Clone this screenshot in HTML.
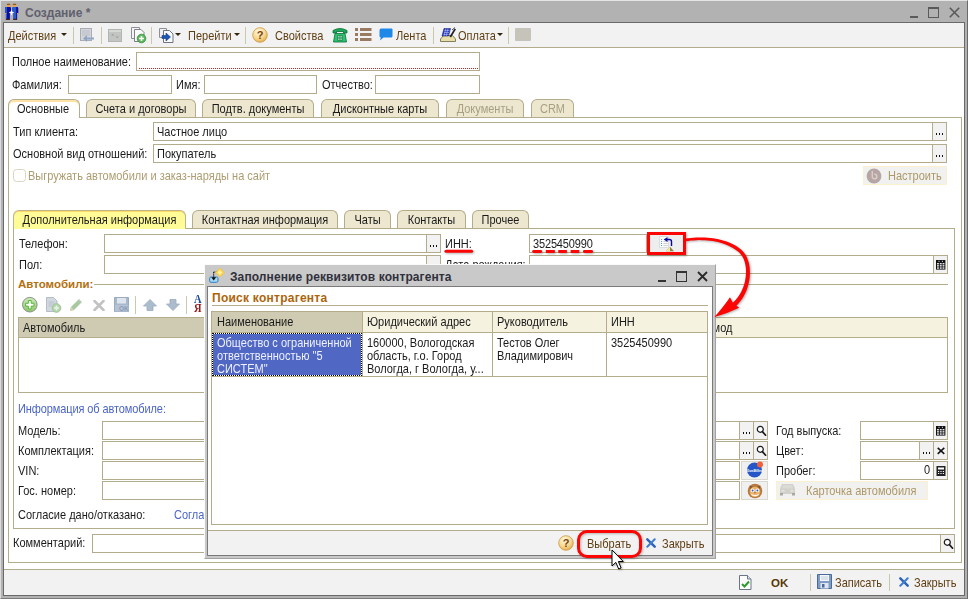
<!DOCTYPE html>
<html lang="ru">
<head>
<meta charset="utf-8">
<title>Создание *</title>
<style>
*{box-sizing:border-box;margin:0;padding:0}
html,body{width:968px;height:599px;overflow:hidden;background:#ababab}
body{font-family:"Liberation Sans",sans-serif;font-size:11px;color:#1a1a1a;position:relative}
.a{position:absolute}
.t{position:absolute;white-space:nowrap;line-height:13px;height:13px;transform:scaleY(1.1);transform-origin:0 10.300px}
.in{position:absolute;background:#fff;border:1px solid #b3ac8c;height:19px}
.btn{position:absolute;background:#f2f2f2;border-left:1px solid #b3ac8c;top:0;bottom:0;text-align:center;font-weight:bold;line-height:15px;font-size:11px;color:#000}
.sep{position:absolute;width:1px;background:#cdc8ac;top:27px;height:17px}
.tab{position:absolute;height:18px;border:1px solid #b4ad8c;border-bottom:none;border-radius:6px 6px 0 0;background:#ede7cf;text-align:center;line-height:19px;white-space:nowrap}
.tab.dis{color:#a8a084}
.pane{position:absolute;border:1px solid #b4ad8c;background:#fff}
.hl{position:absolute;height:1px;background:#b4ad8c}
.vl{position:absolute;width:1px;background:#b4ad8c}
.arr{position:absolute;width:6px;height:3px;background:#33260c;clip-path:polygon(0 0,100% 0,50% 100%)}
.nt{transform:none}
.s{display:inline-block;transform:scaleY(1.1);transform-origin:0 62%}
.br{color:#5e3e12}
.dots{position:absolute;left:3px;top:10px;width:1px;height:2px;background:#111;box-shadow:3px 0 #111,6px 0 #111}
</style>
</head>
<body>
<!-- main window frame -->
<div class="a" id="frame" style="left:0;top:0;width:968px;height:599px;background:#b2b2b2;border-top:1px solid #e4e4e4;border-left:1px solid #dcdcdc;border-right:1px solid #6a6a6a;border-bottom:1px solid #7c7c7c"></div>
<div class="a" id="client" style="left:3px;top:22px;width:962px;height:574px;background:#fff;border:1px solid #696969"></div>
<!-- title -->
<div class="t nt" id="title" style="left:25px;top:6px;font-size:12px;font-weight:bold;color:#60606e;line-height:15px;height:15px">Создание *</div>
<!-- MAIN-TITLE-ICONS -->
<svg class="a" style="left:4px;top:3px" width="16" height="18" viewBox="4 3 16 18"><rect x="6.900" y="3.800" width="3.400" height="3.300" rx="1" fill="#f0a050"/><rect x="6.900" y="3.700" width="3.400" height="1.300" rx="0.600" fill="#8a5a20"/><rect x="12.800" y="3.800" width="3.400" height="3.300" rx="1" fill="#f0a050"/><rect x="12.800" y="3.700" width="3.400" height="1.300" rx="0.600" fill="#8a5a20"/><path d="M5 8.200Q5 7 6.200 7h3.800Q11 7 11 8.200v5.300H9.900v5.800H5.900v-5.800H5z" fill="#0a0aa4"/><path d="M5 8.200Q5 7 6.200 7h0.800v12.300H5.900v-5.800H5z" fill="#2a56c4"/><path d="M12 8.200Q12 7 13.200 7h3.800Q18.200 7 18.200 8.200v5.300h-1.100v5.800h-4v-5.800H12z" fill="#2a5ac8"/><path d="M16.200 7h0.800Q18.200 7 18.200 8.200v5.300h-1.100v5.800h-0.900z" fill="#0c0ca0"/><rect x="5" y="13" width="1.300" height="1" fill="#f0a050"/><rect x="17" y="13" width="1.300" height="1" fill="#f0a050"/><rect x="5.900" y="18.800" width="4" height="1.100" fill="#3a1a10"/><rect x="13.100" y="18.800" width="4" height="1.100" fill="#3a1a10"/><path d="M11.500 9.800l0.900 1.900 1.900 0.900-1.900 0.900-0.900 1.900-0.900-1.900-1.900-0.900 1.900-0.900z" fill="#fff"/></svg>
<div class="a" style="left:910px;top:16px;width:8px;height:2px;background:#5a5a5a"></div>
<div class="a" style="left:928px;top:7px;width:11px;height:11px;border:1px solid #5a5a5a;border-top-width:2px"></div>
<svg class="a" style="left:949px;top:7px" width="11" height="11" viewBox="0 0 11 11"><path d="M0.800 0.800l9.400 9.400M10.200 0.800l-9.400 9.400" stroke="#5a5a5a" stroke-width="1.600"/></svg>

<!-- toolbar -->
<div class="a" id="tb" style="left:4px;top:23px;width:960px;height:25px;background:#f2f2f2;border-bottom:1px solid #b3ac8c"></div>
<!-- TOOLBAR-ITEMS -->
<div class="t br" style="left:8px;top:30px">Действия</div><div class="arr" style="left:61px;top:33px"></div>
<div class="sep" style="left:73px"></div>
<svg class="a" style="left:79px;top:28px" width="16" height="15" viewBox="0 0 16 15"><rect x="1.5" y="0.5" width="11" height="12" fill="#d4d6da" stroke="#a8adb5"/><path d="M3 3h8M3 5h8M3 7h8" stroke="#b9bdc4" stroke-width="1"/><path d="M15 9.5H8v-2.500L4 10.500l4 3.500V11.500h7z" fill="#8fa6c4"/></svg>
<div class="sep" style="left:101px"></div>
<svg class="a" style="left:108px;top:29px" width="14" height="13" viewBox="0 0 14 13"><rect x="0.500" y="0.500" width="13" height="12" fill="#c3c5c3" stroke="#b2b4b2"/><rect x="1" y="1" width="12" height="2" fill="#d6d8d6"/><path d="M3 6.500h3.500L4.800 4.800zM7.500 7.500H11L9.200 9.200z" fill="#98a39a"/></svg>
<svg class="a" style="left:131px;top:27px" width="16" height="17" viewBox="0 0 16 17"><path d="M0.500 0.500h8v11h-8z" fill="#f4f4f4" stroke="#8c9096"/><path d="M3.500 2.500h6.500l3 3v9h-9.500z" fill="#fbfbfb" stroke="#7c8088"/><circle cx="10.500" cy="11.500" r="4.300" fill="#5cb85c" stroke="#3a8a3a" stroke-width="0.800"/><path d="M8 11.500h5M10.500 9v5" stroke="#fff" stroke-width="1.600"/></svg>
<div class="sep" style="left:151px"></div>
<svg class="a" style="left:159px;top:28px" width="15" height="15" viewBox="0 0 15 15"><path d="M0.500 0.500h7v9h-7z" fill="#f0f0f0" stroke="#8c9096"/><path d="M4.500 2.500h6l3.500 3.500v8.500h-9.500z" fill="#fafafa" stroke="#70747c"/><path d="M3 7.500h4V5l4.500 4L7 13v-2.500H3z" fill="#1f55b5" stroke="#123a85" stroke-width="0.600"/></svg>
<div class="arr" style="left:175px;top:33px"></div>
<div class="t br" style="left:188px;top:30px">Перейти</div><div class="arr" style="left:234px;top:33px"></div>
<div class="sep" style="left:245px"></div>
<svg class="a" style="left:252px;top:27px" width="16" height="16" viewBox="0 0 16 16"><defs><radialGradient id="qg" cx="0.400" cy="0.300" r="0.800"><stop offset="0" stop-color="#fffae6"/><stop offset="0.550" stop-color="#f8d88c"/><stop offset="1" stop-color="#dfa040"/></radialGradient></defs><circle cx="8" cy="8" r="7.300" fill="url(#qg)" stroke="#c89a4a" stroke-width="0.800"/><text x="8" y="12" font-family="Liberation Sans,sans-serif" font-size="11" font-weight="bold" fill="#7a4210" text-anchor="middle">?</text></svg>
<div class="t br" style="left:275px;top:30px">Свойства</div>
<svg class="a" style="left:332px;top:27px" width="16" height="16" viewBox="0 0 16 16"><path d="M1 3.500Q8 -0.500 15 3.500v2.500h-3.500V4.500h-7V6H1z" fill="#1aa85a" stroke="#0b6b36" stroke-width="0.800"/><path d="M3 6.500h10l1.500 8.500h-13z" fill="#27c76f" stroke="#0b6b36" stroke-width="0.800"/><path d="M5.500 8.500h5v5h-5zM7.200 8.500v5M8.900 8.500v5M5.500 10.200h5M5.500 11.800h5" fill="#d8ffe8" stroke="#0b6b36" stroke-width="0.600"/></svg>
<svg class="a" style="left:355px;top:28px" width="17" height="13" viewBox="0 0 17 13"><g fill="#977a60"><rect x="0" y="0" width="3" height="3"/><rect x="5" y="0" width="11.500" height="3"/><rect x="0" y="5" width="3" height="3"/><rect x="5" y="5" width="11.500" height="3"/><rect x="0" y="10" width="3" height="3"/><rect x="5" y="10" width="11.500" height="3"/></g></svg>
<svg class="a" style="left:379px;top:28px" width="14" height="13" viewBox="0 0 14 13"><path d="M3 0.500h9.500a1 1 0 0 1 1 1V8a1.500 1.500 0 0 1 -1.500 1.500H4.500L1 12.500 1.800 9.500A1.500 1.500 0 0 1 0.500 8V2.500a2 2 0 0 1 2.500 -2z" fill="#1e88e8"/></svg>
<div class="t br" style="left:396px;top:30px">Лента</div>
<div class="sep" style="left:433px"></div>
<svg class="a" style="left:440px;top:27px" width="17" height="16" viewBox="0 0 17 16"><path d="M0.500 12l3 -3.500h9l3 3.500v2.500h-15z" fill="#e8dfa8" stroke="#6a6440" stroke-width="0.800"/><path d="M4 1.500h6.500L8.500 9H2z" fill="#2a3cc0" stroke="#1a2470" stroke-width="0.600"/><path d="M4.500 3.500h5M4 5.500h5M3.500 7.500h5M5.800 1.500L4 9M8 1.500L6.200 9" stroke="#c8d0ff" stroke-width="0.500"/><path d="M9.500 9.500L14.500 1.500l1.500 0.800L11 10.500z" fill="#222"/><path d="M12 3l3 -2.500" stroke="#222" stroke-width="0.800"/></svg>
<div class="t br" style="left:458px;top:30px">Оплата</div><div class="arr" style="left:497px;top:33px"></div>
<div class="sep" style="left:508px"></div>
<div class="a" style="left:515px;top:28px;width:16px;height:13px;background:#c6c4ba;border-radius:1px"></div>

<!-- FORM -->
<div class="t" style="left:12px;top:56px">Полное наименование:</div>
<div class="in" style="left:136px;top:52px;width:344px"><div class="a" style="left:2px;right:1px;bottom:1px;border-bottom:1px dotted #f01010"></div></div>
<div class="t" style="left:12px;top:79px">Фамилия:</div><div class="in" style="left:68px;top:75px;width:104px"></div>
<div class="t" style="left:176px;top:79px">Имя:</div><div class="in" style="left:204px;top:75px;width:113px"></div>
<div class="t" style="left:322px;top:79px">Отчество:</div><div class="in" style="left:375px;top:75px;width:105px"></div>
<!-- outer pane -->
<div class="pane" style="left:8px;top:117px;width:954px;height:446px"></div>
<div class="tab" style="left:8px;top:99px;width:72px;height:19px;background:#fff;box-shadow:inset 0 2px 0 #ffe3a6;line-height:18px;text-indent:-1px"><span class="s">Основные</span></div>
<div class="tab" style="left:86px;top:99px;width:110px"><span class="s">Счета и договоры</span></div>
<div class="tab" style="left:202px;top:99px;width:112px"><span class="s">Подтв. документы</span></div>
<div class="tab" style="left:321px;top:99px;width:118px"><span class="s">Дисконтные карты</span></div>
<div class="tab dis" style="left:446px;top:99px;width:78px"><span class="s">Документы</span></div>
<div class="tab dis" style="left:531px;top:99px;width:43px"><span class="s">CRM</span></div>
<div class="t" style="left:13px;top:126px">Тип клиента:</div>
<div class="in" style="left:153px;top:122px;width:794px"><div class="t" style="left:3px;top:3px">Частное лицо</div><div class="btn" style="right:0;width:14px"><i class="dots"></i></div></div>
<div class="t" style="left:13px;top:148px">Основной вид отношений:</div>
<div class="in" style="left:153px;top:144px;width:794px"><div class="t" style="left:3px;top:3px">Покупатель</div><div class="btn" style="right:0;width:14px"><i class="dots"></i></div></div>
<div class="a" style="left:13px;top:169px;width:13px;height:13px;border:1px solid #dad5c0;border-radius:3.500px;background:#fff"></div>
<div class="t" style="left:28px;top:170px;color:#ad9c70">Выгружать автомобили и заказ-наряды на сайт</div>
<div class="a" style="left:863px;top:166px;width:84px;height:19px;background:#f1f1f0;border:1px solid #fbf1cf"></div>
<svg class="a" style="left:866px;top:168px" width="16" height="16" viewBox="0 0 16 16"><circle cx="8" cy="8" r="7.400" fill="#b5a5a5"/><path d="M6.300 3.500v5a2.300 2.300 0 1 0 2.500 -2.300" fill="none" stroke="#d9cdc4" stroke-width="1.500" stroke-linecap="round"/></svg>
<div class="t" style="left:888px;top:170px;color:#ad9868">Настроить</div>
<!-- inner pane -->
<div class="pane" style="left:13px;top:228px;width:942px;height:301px"></div>
<div class="tab" style="left:13px;top:210px;width:173px;height:19px;background:#fffb96;box-shadow:inset 0 1px 0 #ffd868;border-color:#bcb48c;line-height:18px"><span class="s">Дополнительная информация</span></div>
<div class="tab" style="left:192px;top:210px;width:146px;height:18px;line-height:18px"><span class="s">Контактная информация</span></div>
<div class="tab" style="left:344px;top:210px;width:47px;height:18px;line-height:18px"><span class="s">Чаты</span></div>
<div class="tab" style="left:397px;top:210px;width:69px;height:18px;line-height:18px"><span class="s">Контакты</span></div>
<div class="tab" style="left:472px;top:210px;width:57px;height:18px;line-height:18px"><span class="s">Прочее</span></div>
<div class="t" style="left:19px;top:238px">Телефон:</div>
<div class="in" style="left:104px;top:234px;width:337px"><div class="btn" style="right:0;width:14px"><i class="dots"></i></div></div>
<div class="t" style="left:445px;top:238px">ИНН:</div>
<svg class="a" style="left:440px;top:246px;overflow:visible" width="40" height="10" viewBox="440 246 40 10"><path d="M446 251.300H471.600" stroke="#fb0505" stroke-width="3.100" stroke-linecap="round" filter="drop-shadow(1px 1px 1px rgba(0,0,0,.3))"/></svg>
<div class="in" style="left:529px;top:234px;width:118px"><div class="t" style="left:3px;top:3px;letter-spacing:-0.150px">3525450990</div></div>
<svg class="a" style="left:528px;top:246px;overflow:visible" width="72" height="12" viewBox="528 246 72 12"><g fill="#fb0505" filter="drop-shadow(1px 1px 1px rgba(0,0,0,.3))"><rect x="532.2" y="249.900" width="9.9" height="3.100" rx="1.400"/><rect x="545.8" y="249.900" width="9.1" height="3.100" rx="0.400"/><rect x="558.2" y="249.900" width="8.7" height="3.100" rx="0.400"/><rect x="570.6" y="249.900" width="8.7" height="3.100" rx="0.400"/><rect x="583.0" y="249.900" width="10.0" height="3.100" rx="1.400"/></g></svg>
<div class="t" style="left:19px;top:259px">Пол:</div>
<div class="in" style="left:104px;top:255px;width:337px"><div class="btn" style="right:0;width:14px"></div></div>
<div class="t" style="left:445px;top:259px">Дата рождения:</div>
<div class="in" style="left:529px;top:255px;width:419px"><div class="btn" style="right:0;width:14px"><svg class="a" style="left:2px;top:4px" width="10" height="10" viewBox="0 0 10 10"><rect x="0" y="0" width="9.400" height="9.600" fill="#111"/><rect x="2.500" y="0.800" width="1" height="1" fill="#fff"/><rect x="5.900" y="0.800" width="1" height="1" fill="#fff"/><rect x="1.0" y="3.1" width="1.900" height="1.300" fill="#fff"/><rect x="3.8" y="3.1" width="1.900" height="1.300" fill="#fff"/><rect x="6.5" y="3.1" width="1.900" height="1.300" fill="#fff"/><rect x="1.0" y="5.2" width="1.900" height="1.300" fill="#fff"/><rect x="3.8" y="5.2" width="1.900" height="1.300" fill="#fff"/><rect x="6.5" y="5.2" width="1.900" height="1.300" fill="#fff"/><rect x="1.0" y="7.4" width="1.900" height="1.300" fill="#fff"/><rect x="3.8" y="7.4" width="1.900" height="1.300" fill="#fff"/><rect x="6.5" y="7.4" width="1.900" height="1.300" fill="#fff"/></svg></div></div>
<div class="t nt" style="left:18px;top:278px;font-size:11.500px;font-weight:bold;color:#b5700e">Автомобили:</div>
<div class="hl" style="left:94px;top:284px;width:854px"></div>
<!-- CAR-TOOLBAR -->
<svg class="a" style="left:21px;top:296px" width="18" height="18" viewBox="0 0 18 18"><defs><linearGradient id="gp" x1="0" y1="0" x2="0" y2="1"><stop offset="0" stop-color="#cfe8bb"/><stop offset="1" stop-color="#8fc46c"/></linearGradient></defs><circle cx="8.800" cy="8.700" r="7.300" fill="url(#gp)" stroke="#7e8a80" stroke-width="0.900"/><path d="M7.400 4.500h2.800v2.800h2.800v2.800h-2.800v2.800h-2.800v-2.800h-2.800v-2.800h2.800z" fill="#fff" stroke="#4ab42c" stroke-width="0.900"/></svg>
<svg class="a" style="left:46px;top:297px" width="16" height="16" viewBox="0 0 16 16"><path d="M0.500 0.500h7l3.500 3.500v10.500h-10.500z" fill="#d2d8e0" stroke="#b4bcc8"/><path d="M2.500 5h6M2.500 7h6M2.500 9h4" stroke="#b8c0cc"/><circle cx="10.500" cy="11" r="4.300" fill="#b4d4ac" stroke="#a0c498"/><path d="M8 11h5M10.500 8.500v5" stroke="#e8f4e4" stroke-width="1.600"/></svg>
<svg class="a" style="left:69px;top:298px" width="14" height="14" viewBox="0 0 14 14"><path d="M1 13l1-4l7.500-7.500l3 3L5 12z" fill="#a8c8a0"/><path d="M1 13l1-4l3 3z" fill="#d8d0b8"/><path d="M9.500 1.500l3 3" stroke="#c0c8c0" stroke-width="1.500"/></svg>
<svg class="a" style="left:93px;top:300px" width="12" height="11" viewBox="0 0 12 11"><path d="M1.500 1l9 9M10.500 1l-9 9" stroke="#c2c2c2" stroke-width="2.600" stroke-linecap="round"/></svg>
<svg class="a" style="left:114px;top:297px" width="16" height="15" viewBox="0 0 16 15"><path d="M0.500 0.500h14v14h-14z" fill="#a9b9cd" stroke="#9aaabf"/><rect x="3" y="1" width="9" height="5.500" fill="#dfe5ee"/><rect x="1" y="8" width="13.500" height="6.500" fill="#b6c3d4"/><text x="5" y="14" font-family="Liberation Sans,sans-serif" font-size="6.500" font-weight="bold" fill="#8b9db6">OK</text></svg>
<div class="sep" style="left:135px;top:296px;height:18px"></div>
<svg class="a" style="left:143px;top:299px" width="14" height="12" viewBox="0 0 14 12"><path d="M7 0.500l6.500 6.500h-3.500v4.500h-6V7h-3.500z" fill="#adbccd" stroke="#9aabc0" stroke-width="0.800"/></svg>
<svg class="a" style="left:166px;top:299px" width="14" height="12" viewBox="0 0 14 12"><path d="M7 11.500l6.500-6.500h-3.500V0.500h-6V5h-3.500z" fill="#adbccd" stroke="#9aabc0" stroke-width="0.800"/></svg>
<div class="sep" style="left:186px;top:296px;height:18px"></div>
<div class="t" style="left:194px;top:295px;font-family:'Liberation Serif',serif;font-weight:bold;font-size:10.500px;color:#1a4a9a;line-height:10px;height:10px">А</div>
<div class="t" style="left:194px;top:304px;font-family:'Liberation Serif',serif;font-weight:bold;font-size:10.500px;color:#941a1a;line-height:10px;height:10px">Я</div>

<div class="a" style="left:18px;top:317px;width:930px;height:76px;border:1px solid #b4ad8c;background:#fff"></div>
<div class="a" style="left:19px;top:318px;width:928px;height:20px;background:#f5f2df;border-bottom:1px solid #b4ad8c"></div>
<div class="a" style="left:19px;top:318px;width:660px;height:20px;background:#cfcab2;border-bottom:1px solid #b4ad8c;border-right:1px solid #b4ad8c"></div>
<div class="t" style="left:23px;top:322px">Автомобиль</div>
<div class="t" style="left:692px;top:322px">Год/мод</div>
<div class="t" style="left:18px;top:403px;color:#4a64c8;letter-spacing:-0.100px">Информация об автомобиле:</div>
<div class="t" style="left:18px;top:425px">Модель:</div>
<div class="in" style="left:102px;top:421px;width:666px"><div class="btn" style="right:14px;width:14px"><i class="dots"></i></div><div class="btn" style="right:0;width:14px"><svg class="a" style="left:1.500px;top:3px" width="11" height="12" viewBox="0 0 11 12"><circle cx="4.300" cy="4.300" r="3" fill="#fff" stroke="#1a1a1a" stroke-width="1.200"/><path d="M6.400 6.600l3.200 3.600" stroke="#1a1a1a" stroke-width="1.700" stroke-linecap="round"/></svg></div></div>
<div class="t" style="left:18px;top:445px">Комплектация:</div>
<div class="in" style="left:102px;top:441px;width:666px"><div class="btn" style="right:14px;width:14px"><i class="dots"></i></div><div class="btn" style="right:0;width:14px"><svg class="a" style="left:1.500px;top:3px" width="11" height="12" viewBox="0 0 11 12"><circle cx="4.300" cy="4.300" r="3" fill="#fff" stroke="#1a1a1a" stroke-width="1.200"/><path d="M6.400 6.600l3.200 3.600" stroke="#1a1a1a" stroke-width="1.700" stroke-linecap="round"/></svg></div></div>
<div class="t" style="left:18px;top:465px">VIN:</div>
<div class="in" style="left:102px;top:461px;width:638px"></div><div class="a" style="left:741px;top:461px;width:27px;height:19px;background:#f0f0f0;border:1px solid #dad8cc"><svg class="a" style="left:3.500px;top:-1.500px" width="18" height="17" viewBox="0 0 18 17"><circle cx="8.500" cy="9" r="7.500" fill="#2456c8"/><circle cx="14" cy="3.500" r="3" fill="#f0603a"/><text x="8.500" y="11" font-family="Liberation Sans,sans-serif" font-size="3.500" font-weight="bold" fill="#fff" text-anchor="middle">GosBiller</text></svg></div>
<div class="t" style="left:18px;top:485px">Гос. номер:</div>
<div class="in" style="left:102px;top:481px;width:638px"></div><div class="a" style="left:741px;top:481px;width:27px;height:19px;background:#f0f0f0;border:1px solid #dad8cc"><svg class="a" style="left:4.500px;top:0.500px" width="16" height="16" viewBox="0 0 16 16"><circle cx="8" cy="8" r="7.300" fill="#b8793e"/><path d="M2.500 2.500l3 1.300h5l3-1.300l-0.800 3.500h-9.400z" fill="#8a5424"/><circle cx="8" cy="8.800" r="5.300" fill="#e9b06a"/><circle cx="5.600" cy="7.400" r="1.900" fill="#fff"/><circle cx="10.400" cy="7.400" r="1.900" fill="#fff"/><circle cx="5.600" cy="7.400" r="1" fill="#2c62c8"/><circle cx="10.400" cy="7.400" r="1" fill="#2c62c8"/><path d="M4.300 10.800q3.700 2.600 7.400 0v1.200q-3.700 2.600-7.400 0z" fill="#fdf6ea"/><path d="M7.200 9.300h1.600l-0.800 1.300z" fill="#7a3e10"/></svg></div>
<div class="t" style="left:776px;top:425px">Год выпуска:</div>
<div class="in" style="left:860px;top:421px;width:88px"><div class="btn" style="right:0;width:14px"><svg class="a" style="left:2px;top:4px" width="10" height="10" viewBox="0 0 10 10"><rect x="0" y="0" width="9.400" height="9.600" fill="#111"/><rect x="2.500" y="0.800" width="1" height="1" fill="#fff"/><rect x="5.900" y="0.800" width="1" height="1" fill="#fff"/><rect x="1.0" y="3.1" width="1.900" height="1.300" fill="#fff"/><rect x="3.8" y="3.1" width="1.900" height="1.300" fill="#fff"/><rect x="6.5" y="3.1" width="1.900" height="1.300" fill="#fff"/><rect x="1.0" y="5.2" width="1.900" height="1.300" fill="#fff"/><rect x="3.8" y="5.2" width="1.900" height="1.300" fill="#fff"/><rect x="6.5" y="5.2" width="1.900" height="1.300" fill="#fff"/><rect x="1.0" y="7.4" width="1.900" height="1.300" fill="#fff"/><rect x="3.8" y="7.4" width="1.900" height="1.300" fill="#fff"/><rect x="6.5" y="7.4" width="1.900" height="1.300" fill="#fff"/></svg></div></div>
<div class="t" style="left:776px;top:445px">Цвет:</div>
<div class="in" style="left:860px;top:441px;width:88px"><div class="btn" style="right:14px;width:14px"><i class="dots"></i></div><div class="btn" style="right:0;width:14px"><svg class="a" style="left:3px;top:5px" width="8" height="8" viewBox="0 0 8 8"><path d="M0.700 0.900l6.600 6M7.300 0.900l-6.600 6" stroke="#111" stroke-width="1.500"/></svg></div></div>
<div class="t" style="left:776px;top:465px">Пробег:</div>
<div class="in" style="left:860px;top:461px;width:88px"><div class="t" style="right:17px;top:2px">0</div><div class="btn" style="right:0;width:14px"><svg class="a" style="left:2px;top:4px" width="10" height="10" viewBox="0 0 9 10"><rect x="0" y="0" width="9" height="10" fill="#222"/><rect x="1.500" y="1.500" width="6" height="2" fill="#fff"/><path d="M1.500 5.500h6M1.500 7.500h6" stroke="#fff" stroke-width="1" stroke-dasharray="1.200 1.200"/></svg></div></div>
<div class="a" style="left:776px;top:481px;width:152px;height:19px;background:#f1f1f0;border:1px solid #fbf1cf"></div>
<svg class="a" style="left:779px;top:483px" width="17" height="13" viewBox="0 0 17 13"><path d="M3 1h11l2 4.500v5.500h-15V5.500z" fill="#d2d0ca"/><path d="M4 2h9l1.300 3.500H2.700z" fill="#dcdad4"/><rect x="1" y="10" width="3" height="2.500" fill="#aaa8a2"/><rect x="13" y="10" width="3" height="2.500" fill="#aaa8a2"/><rect x="2.500" y="7" width="3" height="1.500" fill="#e8e6e0"/><rect x="11.500" y="7" width="3" height="1.500" fill="#e8e6e0"/></svg>
<div class="t" style="left:806px;top:485px;color:#ad9868">Карточка автомобиля</div>
<div class="t" style="left:18px;top:509px">Согласие дано/отказано:</div>
<div class="t" style="left:174px;top:509px;color:#4a64c8">Согласие не получено</div>
<div class="t" style="left:13px;top:537px">Комментарий:</div>
<div class="in" style="left:92px;top:534px;width:863px"><div class="btn" style="right:0;width:14px"><svg class="a" style="left:1.500px;top:3px" width="11" height="12" viewBox="0 0 11 12"><circle cx="4.300" cy="4.300" r="3" fill="#fff" stroke="#1a1a1a" stroke-width="1.200"/><path d="M6.400 6.600l3.200 3.600" stroke="#1a1a1a" stroke-width="1.700" stroke-linecap="round"/></svg></div></div>
<!-- bottom toolbar -->
<div class="a" style="left:4px;top:569px;width:960px;height:26px;background:#f2f2f2;border-top:1px solid #b3ac8c"></div>
<svg class="a" style="left:739px;top:575px" width="13" height="15" viewBox="0 0 13 15"><path d="M0.500 0.500h8l3.500 3.500v10.500h-11.500z" fill="#fdfdfd" stroke="#6a7686"/><path d="M8.500 0.500v3.500h3.500" fill="#dfe6ee" stroke="#6a7686"/><path d="M3 9l2.500 2.500l4.500 -5" fill="none" stroke="#2e9a2e" stroke-width="2"/></svg>
<div class="t nt" style="left:771px;top:577px;font-weight:bold;font-size:11.500px;color:#5a3606">OK</div>
<div class="sep" style="left:810px;top:574px"></div>
<svg class="a" style="left:817px;top:574px" width="15" height="15" viewBox="0 0 15 15"><path d="M0.500 0.500h14v14h-14z" fill="#7f9cc4" stroke="#4a6a9a"/><rect x="3" y="1" width="9" height="6" fill="#f4f6fa"/><path d="M4 3h7M4 5h7" stroke="#b8c4d8" stroke-width="0.800"/><rect x="3.500" y="9" width="8" height="5.500" fill="#dfe6f0"/><rect x="5" y="10" width="2.500" height="3.500" fill="#4a6a9a"/></svg>
<div class="t br" style="left:835px;top:577px">Записать</div>
<div class="sep" style="left:889px;top:574px"></div>
<svg class="a" style="left:898.5px;top:577px" width="10" height="10" viewBox="0 0 10 10"><path d="M1.300 1.300l7.400 7.400" stroke="#2b64b4" stroke-width="2.400" stroke-linecap="round"/><path d="M8.700 1.300l-7.400 7.400" stroke="#3f7cd0" stroke-width="2" stroke-linecap="round"/></svg>
<div class="t br" style="left:914px;top:577px">Закрыть</div>

<!-- DIALOG -->
<div class="a" id="dlg" style="left:204px;top:264px;width:512px;height:295px;background:#c9c9c9;border:1px solid #fafafa;border-right:1px solid #a2a2a2;border-bottom:1px solid #a2a2a2"></div>
<svg class="a" style="left:207px;top:266px" width="20" height="18" viewBox="207 266 20 18"><rect x="209.600" y="277" width="8.400" height="5.300" rx="1.500" fill="#a6d6f4" stroke="#2f7fc4" stroke-width="1"/><path d="M213.700 272V278" stroke="#111" stroke-width="1" stroke-dasharray="1.500 0.700"/><path d="M213.700 272H217" stroke="#111" stroke-width="1" stroke-dasharray="1 1"/><path d="M211.300 277.300h4.800l-2.400 3.100z" fill="#111"/><path d="M219.900 268.200l4.300 4.400l-4.300 4.400l-4.300-4.400z" fill="#ffd84a" stroke="#f2b72a" stroke-width="0.500"/><path d="M219.900 270.300l2.200 2.300l-2.200 2.300l-2.200-2.300z" fill="#fff2a8"/></svg>
<div class="t nt" style="left:230px;top:270px;font-size:12px;font-weight:bold;color:#30303c;line-height:15px;height:15px;letter-spacing:0.100px">Заполнение реквизитов контрагента</div>
<div class="a" style="left:658px;top:280px;width:8px;height:2px;background:#333"></div>
<div class="a" style="left:676px;top:271px;width:11px;height:11px;border:1px solid #333;border-top-width:2px"></div>
<svg class="a" style="left:697px;top:271px" width="11" height="11" viewBox="0 0 11 11"><path d="M1 1l9 9M10 1l-9 9" stroke="#2a2a2a" stroke-width="1.800"/></svg>
<div class="a" style="left:207px;top:286px;width:506px;height:270px;background:#fff;border:1px solid #7a7a7a"></div>
<div class="t nt" style="left:212px;top:291px;font-size:12px;font-weight:bold;color:#ad640a;line-height:15px;height:15px;letter-spacing:0.250px">Поиск контрагента</div>
<div class="hl" style="left:212px;top:305px;width:496px"></div>
<div class="a" style="left:211px;top:311px;width:497px;height:214px;border:1px solid #b4ad8c;background:#fff"></div>
<div class="a" style="left:212px;top:312px;width:495px;height:21px;background:#f5f2df;border-bottom:1px solid #b4ad8c"></div>
<div class="a" style="left:212px;top:312px;width:151px;height:21px;background:#cfcab2;border-bottom:1px solid #b4ad8c"></div>
<div class="vl" style="left:362px;top:312px;height:65px"></div>
<div class="vl" style="left:492px;top:312px;height:65px"></div>
<div class="vl" style="left:606px;top:312px;height:65px"></div>
<div class="hl" style="left:212px;top:376px;width:495px"></div>
<div class="t" style="left:217px;top:316px">Наименование</div>
<div class="t" style="left:367px;top:316px">Юридический адрес</div>
<div class="t" style="left:497px;top:316px">Руководитель</div>
<div class="t" style="left:611px;top:316px">ИНН</div>
<div class="a" style="left:212px;top:333px;width:150px;height:43px;background:#fff"></div><div class="a" style="left:212px;top:333px;width:150px;height:43px;background:#5068c4;background-clip:padding-box;border:1px dotted #000"></div>
<div class="t" style="left:217px;top:337px;color:#eef0ff">Общество с ограниченной</div><div class="t" style="left:217px;top:350px;color:#eef0ff">ответственностью "5</div><div class="t" style="left:217px;top:363px;color:#eef0ff">СИСТЕМ"</div>
<div class="t" style="left:367px;top:337px">160000, Вологодская</div><div class="t" style="left:367px;top:350px">область, г.о. Город</div><div class="t" style="left:367px;top:363px">Вологда, г Вологда, у...</div>
<div class="t" style="left:497px;top:337px">Тестов Олег</div><div class="t" style="left:497px;top:350px">Владимирович</div>
<div class="t" style="left:611px;top:337px">3525450990</div>
<div class="a" style="left:208px;top:530px;width:504px;height:25px;background:#f2f2f2;border-top:1px solid #b3ac8c"></div>
<svg class="a" style="left:558px;top:535px" width="16" height="16" viewBox="0 0 16 16"><circle cx="8" cy="8" r="7.300" fill="url(#qg)" stroke="#c89a4a" stroke-width="0.800"/><text x="8" y="12" font-family="Liberation Sans,sans-serif" font-size="11" font-weight="bold" fill="#7a4210" text-anchor="middle">?</text></svg>
<div class="t br" style="left:587px;top:538px">Выбрать</div>
<svg class="a" style="left:646.3px;top:538px" width="10" height="10" viewBox="0 0 10 10"><path d="M1.300 1.300l7.400 7.400" stroke="#2b64b4" stroke-width="2.400" stroke-linecap="round"/><path d="M8.700 1.300l-7.400 7.400" stroke="#3f7cd0" stroke-width="2" stroke-linecap="round"/></svg>
<div class="t br" style="left:662px;top:538px">Закрыть</div>

<!-- ANNOTATIONS -->
<div class="a" style="left:647px;top:232px;width:39px;height:23px;border:3px solid #fb0505;background:#eee;box-shadow:1px 1px 2px rgba(0,0,0,.3)"></div>
<svg class="a" style="left:658px;top:235px" width="18" height="18" viewBox="658 235 18 18"><path d="M659.500 236.500h9v11h-9z" fill="#fcfcfc" stroke="#d4d8dc" stroke-width="0.800"/><path d="M661 239.500h1M661 241.500h1M661 243.500h1M661 245.500h1" stroke="#4aa2e2" stroke-width="1"/><path d="M663.300 241.500h4.500M663.300 243.500h4.500M663.300 245.500h4.500" stroke="#c4c8cc" stroke-width="0.800"/><path d="M666.500 239.500h3a2 2 0 0 1 2 2V246" fill="none" stroke="#0808a0" stroke-width="1.400"/><path d="M663.700 239.500l3.800-2.600v5.200z" fill="#0808a0"/><path d="M666 251.200l4-4.400l4 4.400z" fill="#8a8250"/><path d="M666 251.200l4-4.400v4.400z" fill="#f2ec9c"/></svg>
<svg class="a" style="left:680px;top:230px;overflow:visible" width="80" height="95" viewBox="680 230 80 95"><g fill="#fb0505" filter="drop-shadow(1px 1px 1.200px rgba(0,0,0,.3))"><path d="M685.7 241.2L688.3 240.9L691.0 240.6L693.7 240.4L696.5 240.2L699.2 240.1L701.9 240.2L704.6 240.2L707.2 240.4L709.9 240.7L712.6 241.1L715.2 241.6L717.8 242.1L720.4 242.8L722.9 243.6L725.5 244.6L728.0 245.6L730.4 246.7L732.8 248.0L735.1 249.4L737.3 251.0L739.2 252.6L740.9 254.5L742.3 256.5L743.5 258.7L744.4 261.1L745.1 263.6L745.6 266.2L745.9 268.8L746.0 271.5L745.9 274.1L745.7 276.7L745.3 279.3L744.8 281.9L744.1 284.4L743.3 286.9L742.3 289.3L741.2 291.7L739.9 294.0L738.5 296.2L737.0 298.2L735.3 300.2L733.5 302.0L731.6 303.7L734.4 307.3L736.7 305.4L738.7 303.3L740.5 301.0L742.2 298.7L743.7 296.2L745.1 293.6L746.3 291.0L747.3 288.3L748.1 285.6L748.8 282.8L749.4 280.0L749.7 277.2L749.9 274.3L749.9 271.4L749.8 268.5L749.4 265.6L748.8 262.7L747.9 259.9L746.8 257.1L745.4 254.6L743.6 252.2L741.6 250.1L739.4 248.2L737.0 246.5L734.5 245.1L731.9 243.7L729.2 242.6L726.6 241.6L723.9 240.7L721.2 239.9L718.5 239.2L715.7 238.7L713.0 238.2L710.2 237.9L707.4 237.7L704.7 237.6L701.9 237.5L699.1 237.5L696.3 237.6L693.6 237.8L690.8 238.0L688.1 238.3L685.3 238.6z"/><path d="M714.200 317.300Q724 306 730 297.200L733.300 303.500L739.300 307.800Q726 314 714.200 317.300z"/></g></svg>
<div class="a" style="left:576.500px;top:529.500px;width:65px;height:28px;border:3px solid #fb0505;border-radius:10px;filter:drop-shadow(1px 1px 1px rgba(0,0,0,.25))"></div>
<svg class="a" style="left:610.800px;top:549px;filter:drop-shadow(1px 1px 1px rgba(0,0,0,.3))" width="14" height="21" viewBox="0 0 14 21"><path d="M1 1v16l3.800-3.600L7.700 20l2.400-1L7.400 12.500H12.300z" fill="#fff" stroke="#000" stroke-width="1" stroke-linejoin="round"/></svg>

</body>
</html>
